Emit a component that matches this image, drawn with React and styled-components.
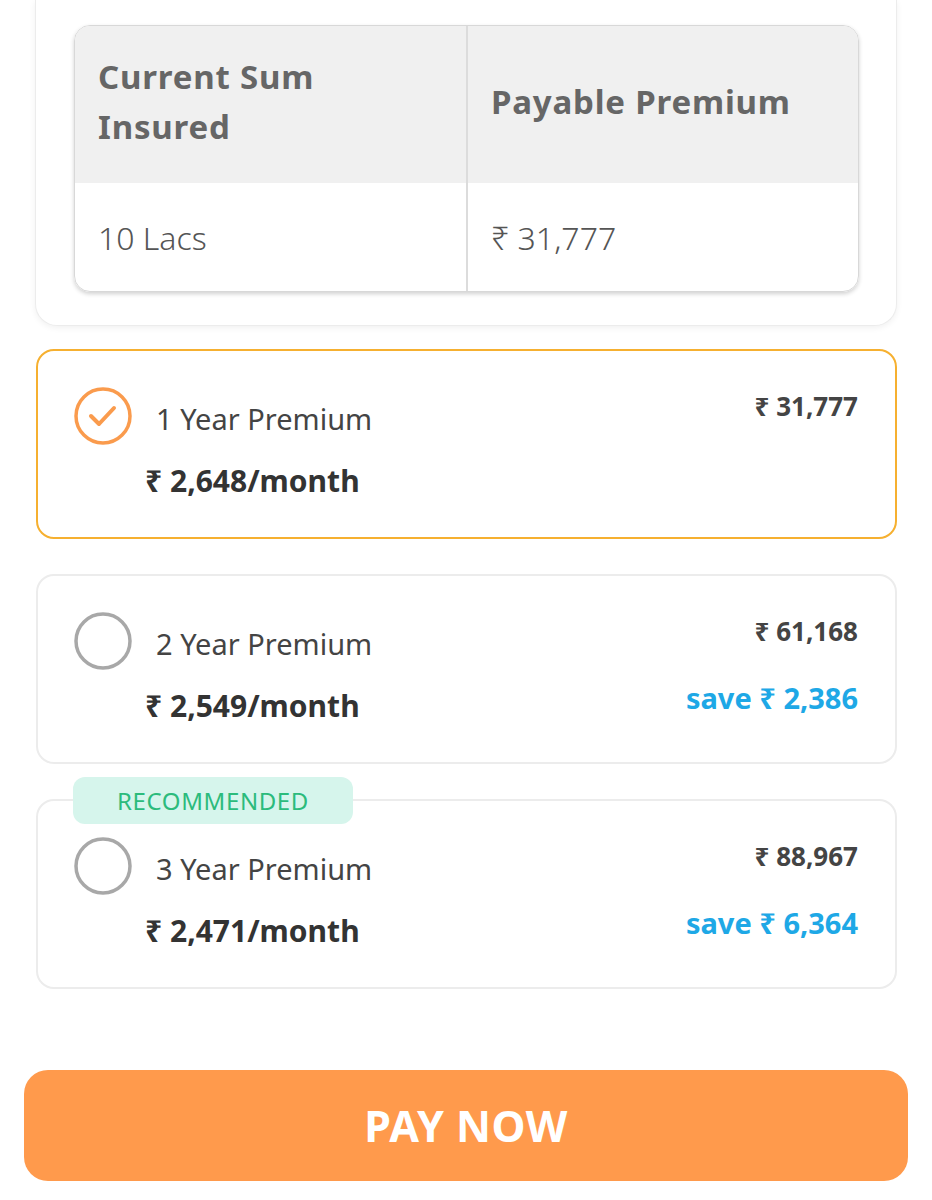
import styled, { createGlobalStyle } from 'styled-components'

const GlobalStyle = createGlobalStyle`
  body {
    margin: 0;
    background: #ffffff;
    font-family: "Noto Sans", "DejaVu Sans", sans-serif;
  }
`

const plans = [
  { years: 1, total: '31,777', month: '2,648', save: null, selected: true },
  { years: 2, total: '61,168', month: '2,549', save: '2,386' },
  { years: 3, total: '88,967', month: '2,471', save: '6,364', recommended: true },
]

export default function App() {
  return (
    <>
      <GlobalStyle />
      <Page>
        <SummaryCard>
          <Table>
            <HeadCell>Current Sum<br />Insured</HeadCell>
            <HeadCell $right>Payable Premium</HeadCell>
            <BodyCell>10 Lacs</BodyCell>
            <BodyCell $right>₹ 31,777</BodyCell>
          </Table>
        </SummaryCard>

        <Plans>
          {plans.map(p => (
            <PlanWrap key={p.years}>
              {p.recommended && <Badge>RECOMMENDED</Badge>}
              <PlanCard $selected={p.selected}>
                <Left>
                  <TitleRow>
                    <Radio selected={p.selected} />
                    <PlanTitle>{p.years} Year Premium</PlanTitle>
                  </TitleRow>
                  <Monthly>₹ {p.month}/month</Monthly>
                </Left>
                <Right>
                  <Total>₹ {p.total}</Total>
                  {p.save && <Save>save ₹ {p.save}</Save>}
                </Right>
              </PlanCard>
            </PlanWrap>
          ))}
        </Plans>

        <PayButton>PAY NOW</PayButton>
      </Page>
    </>
  )
}

function Radio({ selected }) {
  return (
    <svg width="60" height="60" viewBox="0 0 60 60">
      {selected ? (
        <>
          <circle cx="30" cy="30" r="27" fill="none" stroke="#fa9b4d" strokeWidth="3.5" />
          <polyline points="18,30 26,38 41,22" fill="none" stroke="#fa9b4d" strokeWidth="4" strokeLinecap="round" strokeLinejoin="round" />
        </>
      ) : (
        <circle cx="30" cy="30" r="27" fill="none" stroke="#a8a8a8" strokeWidth="3.5" />
      )}
    </svg>
  )
}

const Page = styled.div`
  width: 932px;
  display: flex;
  flex-direction: column;
`

const SummaryCard = styled.div`
  margin: 0 35px;
  padding: 25px 37px 33px 38px;
  background: #fff;
  border: 1px solid #ececec;
  border-top: none;
  border-radius: 0 0 22px 22px;
  box-shadow: 0 2px 6px rgba(0, 0, 0, 0.06);
`

const Table = styled.div`
  display: grid;
  grid-template-columns: 391px 1fr;
  grid-template-rows: 157px 108px;
  border-radius: 16px;
  overflow: hidden;
  border: 1px solid #d8d8d8;
  box-shadow: 0 2px 4px rgba(0, 0, 0, 0.18);
`

const HeadCell = styled.div`
  background: #f0f0f0;
  display: flex;
  align-items: center;
  padding: 0 23px 6px;
  font-size: 33px;
  line-height: 50px;
  font-weight: 700;
  color: #666;
  letter-spacing: 0.8px;
  border-left: ${p => (p.$right ? '2px solid #dcdcdc' : 'none')};
`

const BodyCell = styled.div`
  display: flex;
  align-items: center;
  padding: 0 23px;
  font-size: 32px;
  font-weight: 300;
  color: #555;
  border-left: ${p => (p.$right ? '2px solid #dcdcdc' : 'none')};
`

const Plans = styled.div`
  display: flex;
  flex-direction: column;
  gap: 35px;
  margin: 23px 35px 0 36px;
`

const PlanWrap = styled.div`
  position: relative;
`

const Badge = styled.div`
  position: absolute;
  left: 37px;
  top: -22px;
  width: 280px;
  height: 47px;
  border-radius: 12px;
  background: #d6f5ec;
  color: #2cbb7c;
  font-size: 24px;
  letter-spacing: 0.6px;
  display: flex;
  align-items: center;
  justify-content: center;
  z-index: 1;
`

const PlanCard = styled.div`
  box-sizing: border-box;
  height: 190px;
  border-radius: 18px;
  border: 2px solid ${p => (p.$selected ? '#f6b030' : '#ececec')};
  background: #fff;
  display: flex;
  justify-content: space-between;
  padding: 35px 37px 0 36px;
`

const Left = styled.div`
  display: flex;
  flex-direction: column;
`

const TitleRow = styled.div`
  display: flex;
  align-items: center;
  gap: 23px;
  margin-left: -1px;
`

const PlanTitle = styled.div`
  font-size: 29px;
  font-weight: 400;
  color: #444;
  padding-top: 4px;
`

const Monthly = styled.div`
  margin-top: 14px;
  margin-left: 71px;
  font-size: 30px;
  font-weight: 700;
  color: #333;
`

const Right = styled.div`
  display: flex;
  flex-direction: column;
  align-items: flex-end;
  padding-top: 2px;
`

const Total = styled.div`
  font-size: 26px;
  font-weight: 700;
  color: #444;
`

const Save = styled.div`
  margin-top: 29px;
  font-size: 29px;
  font-weight: 700;
  color: #1ea8e6;
`

const PayButton = styled.button`
  margin: 81px 24px 0;
  height: 111px;
  border: none;
  border-radius: 24px;
  background: #ff9a4c;
  color: #fff;
  font-family: "Noto Sans", "DejaVu Sans", sans-serif;
  font-size: 43px;
  font-weight: 700;
  letter-spacing: 0.5px;
`
